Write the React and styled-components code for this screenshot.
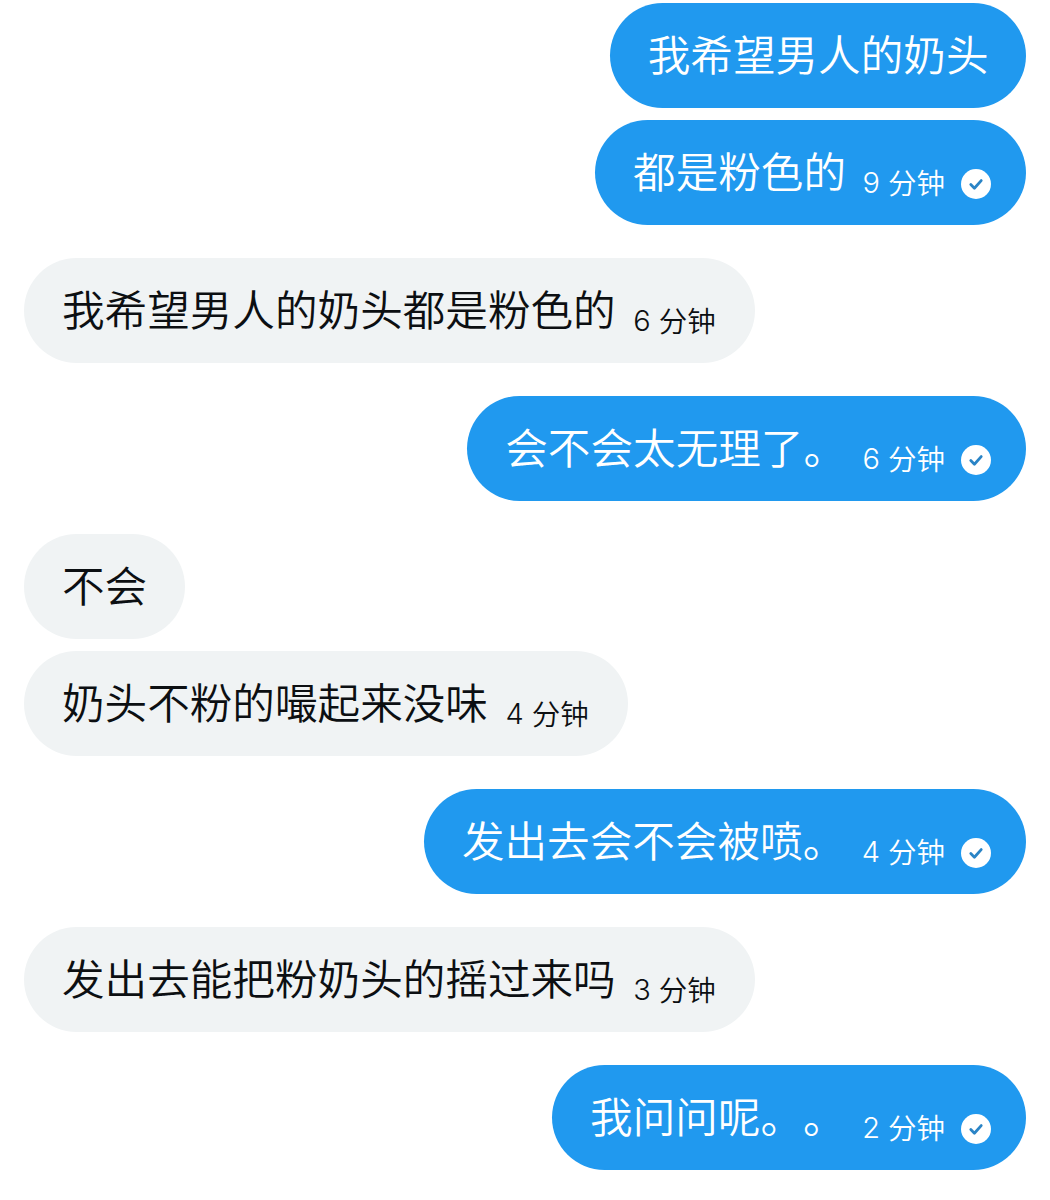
import React from "react";
import styled, { createGlobalStyle } from "styled-components";

const GlobalStyle = createGlobalStyle`
  html, body {
    margin: 0;
    padding: 0;
    background: #fff;
  }
`;

const Thread = styled.div`
  width: 1050px;
  height: 1200px;
  box-sizing: border-box;
  padding: 3.4px 24px 0;
  display: flex;
  flex-direction: column;
  gap: 33px;
  overflow: hidden;
  font-family: "Noto Sans CJK SC", "Noto Sans CJK JP", sans-serif;
  text-spacing-trim: space-all;
`;

const Group = styled.div`
  display: flex;
  flex-direction: column;
  align-items: ${(p) => (p.$mine ? "flex-end" : "flex-start")};
  gap: 12px;
`;

const Bubble = styled.div`
  height: 105px;
  box-sizing: border-box;
  padding: 0 ${(p) => (!p.$hasMeta ? "37.5px" : p.$mine ? "35px" : "39.5px")} 0 38px;
  border-radius: 52.5px;
  display: flex;
  align-items: center;
  background: ${(p) => (p.$mine ? "#2099ef" : "#f0f3f4")};
  color: ${(p) => (p.$mine ? "#fff" : "#0c0f12")};
`;

const Text = styled.span`
  font-size: 42.6px;
  font-weight: 350;
  line-height: 1;
  white-space: nowrap;
  position: relative;
  top: -3px;
`;

const Meta = styled.span`
  display: flex;
  align-items: center;
  margin-left: ${(p) => (p.$mine ? "16.5px" : "17.5px")};
  margin-top: 19px;
  font-size: 28.5px;
  font-weight: 350;
  line-height: 1;
  white-space: nowrap;
`;

const Digit = styled.span`
  font-family: "Inter", "Roboto", sans-serif;
  font-size: 29px;
  font-weight: 300;
  margin-right: 8px;
`;

const Tick = styled.svg`
  width: 30px;
  height: 30px;
  margin-left: 16px;
  flex: none;
  transform: translateY(2px);
`;

const CheckIcon = () => (
  <Tick viewBox="0 0 30 30">
    <circle cx="15" cy="15" r="15" fill="#fff" />
    <path
      d="M9.8 15.6l3.6 3.6 6.8-7.6"
      fill="none"
      stroke="#2a84c6"
      strokeWidth="2.8"
      strokeLinecap="round"
      strokeLinejoin="round"
    />
  </Tick>
);

const groups = [
  {
    mine: true,
    items: [
      { text: "我希望男人的奶头" },
      { text: "都是粉色的", mins: 9 },
    ],
  },
  { mine: false, items: [{ text: "我希望男人的奶头都是粉色的", mins: 6 }] },
  { mine: true, items: [{ text: "会不会太无理了。", mins: 6 }] },
  {
    mine: false,
    items: [{ text: "不会" }, { text: "奶头不粉的嘬起来没味", mins: 4 }],
  },
  { mine: true, items: [{ text: "发出去会不会被喷。", mins: 4 }] },
  { mine: false, items: [{ text: "发出去能把粉奶头的摇过来吗", mins: 3 }] },
  { mine: true, items: [{ text: "我问问呢。。", mins: 2 }] },
];

export default function App() {
  return (
    <>
      <GlobalStyle />
      <Thread>
        {groups.map((group, i) => (
          <Group key={i} $mine={group.mine}>
            {group.items.map((item) => (
              <Bubble key={item.text} $mine={group.mine} $hasMeta={!!item.mins}>
                <Text>{item.text}</Text>
                {item.mins && (
                  <Meta $mine={group.mine}>
                    <Digit>{item.mins}</Digit>分钟
                    {group.mine && <CheckIcon />}
                  </Meta>
                )}
              </Bubble>
            ))}
          </Group>
        ))}
      </Thread>
    </>
  );
}
